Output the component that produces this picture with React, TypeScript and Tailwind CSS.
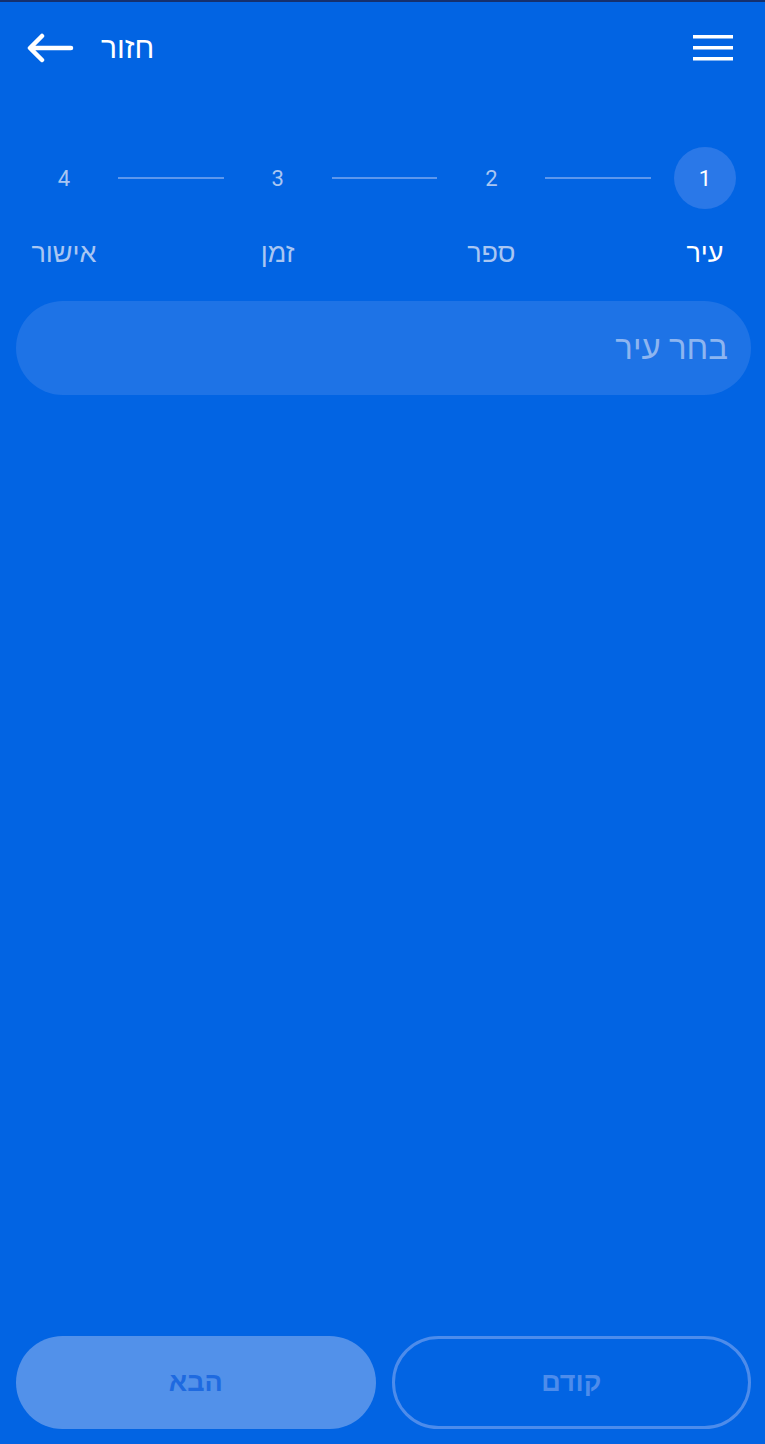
import React from "react";

const font = { fontFamily: 'Roboto, "Liberation Sans", "DejaVu Sans", sans-serif' };

const steps = [
  { n: "1", label: "עיר", active: true },
  { n: "2", label: "ספר", active: false },
  { n: "3", label: "זמן", active: false },
  { n: "4", label: "אישור", active: false },
];

export default function App() {
  return (
    <div dir="rtl" style={font} className="flex h-[1444px] w-[765px] flex-col bg-[#0264e3]">
      <div className="h-[2px] w-full bg-[#15306e]" />
      {/* header */}
      <div dir="ltr" className="flex h-[92px] items-center justify-between pl-[27px] pr-[32px]">
        <div className="flex items-center gap-[27px]">
          <svg width="47" height="30" viewBox="0 0 47 30" fill="none">
            <path d="M44 15H4M15 3L3 15l12 12" stroke="white" strokeWidth="4.5" strokeLinecap="round" strokeLinejoin="round" />
          </svg>
          <span dir="rtl" className="text-[30px] leading-none text-white">חזור</span>
        </div>
        <svg width="40" height="28" viewBox="0 0 40 28">
          <rect x="0" y="1" width="40" height="3.5" fill="white" />
          <rect x="0" y="12" width="40" height="3.5" fill="white" />
          <rect x="0" y="23" width="40" height="3.5" fill="white" />
        </svg>
      </div>
      {/* stepper */}
      <div className="mt-[53px] flex items-center pl-[33px] pr-[29px]">
        {steps.map((s, i) => (
          <React.Fragment key={s.n}>
            <div
              className={`flex h-[62px] w-[62px] shrink-0 items-center justify-center rounded-full text-[22px] ${
                s.active ? "bg-[#2a78e8] text-white" : "text-[#a9c6f2]"
              }`}
            >
              {s.n}
            </div>
            {i < steps.length - 1 && (
              <div className="flex flex-1 items-center px-[23px]">
                <div className="h-[2px] w-full bg-[#5d97ec]" />
              </div>
            )}
          </React.Fragment>
        ))}
      </div>
      <div className="mt-[26px] flex items-center pl-[33px] pr-[29px]">
        {steps.map((s, i) => (
          <React.Fragment key={s.n}>
            <div
              className={`flex h-[36px] w-[62px] shrink-0 items-center justify-center whitespace-nowrap text-[27px] ${
                s.active ? "text-white" : "text-[#a9c6f2]"
              }`}
            >
              {s.label}
            </div>
            {i < steps.length - 1 && <div className="flex-1" />}
          </React.Fragment>
        ))}
      </div>
      {/* input */}
      <div className="mt-[30px] pl-[16px] pr-[14px]">
        <div className="flex h-[94px] items-center rounded-full bg-[#1e73e6] pr-[23px] pl-6 text-[33px] text-[#8db5f0]">
          בחר עיר
        </div>
      </div>
      <div className="flex-1" />
      {/* buttons */}
      <div className="grid grid-cols-2 gap-[16px] pl-[16px] pr-[14px] pb-[15px]">
        <button className="flex h-[93px] items-center justify-center rounded-full border-[3px] border-[#4d8ceb] text-[27px] font-semibold text-[#4d8ceb]">
          קודם
        </button>
        <button className="flex h-[93px] items-center justify-center rounded-full bg-[#5291ea] text-[27px] font-semibold text-[#1e6ae0]">
          הבא
        </button>
      </div>
    </div>
  );
}
